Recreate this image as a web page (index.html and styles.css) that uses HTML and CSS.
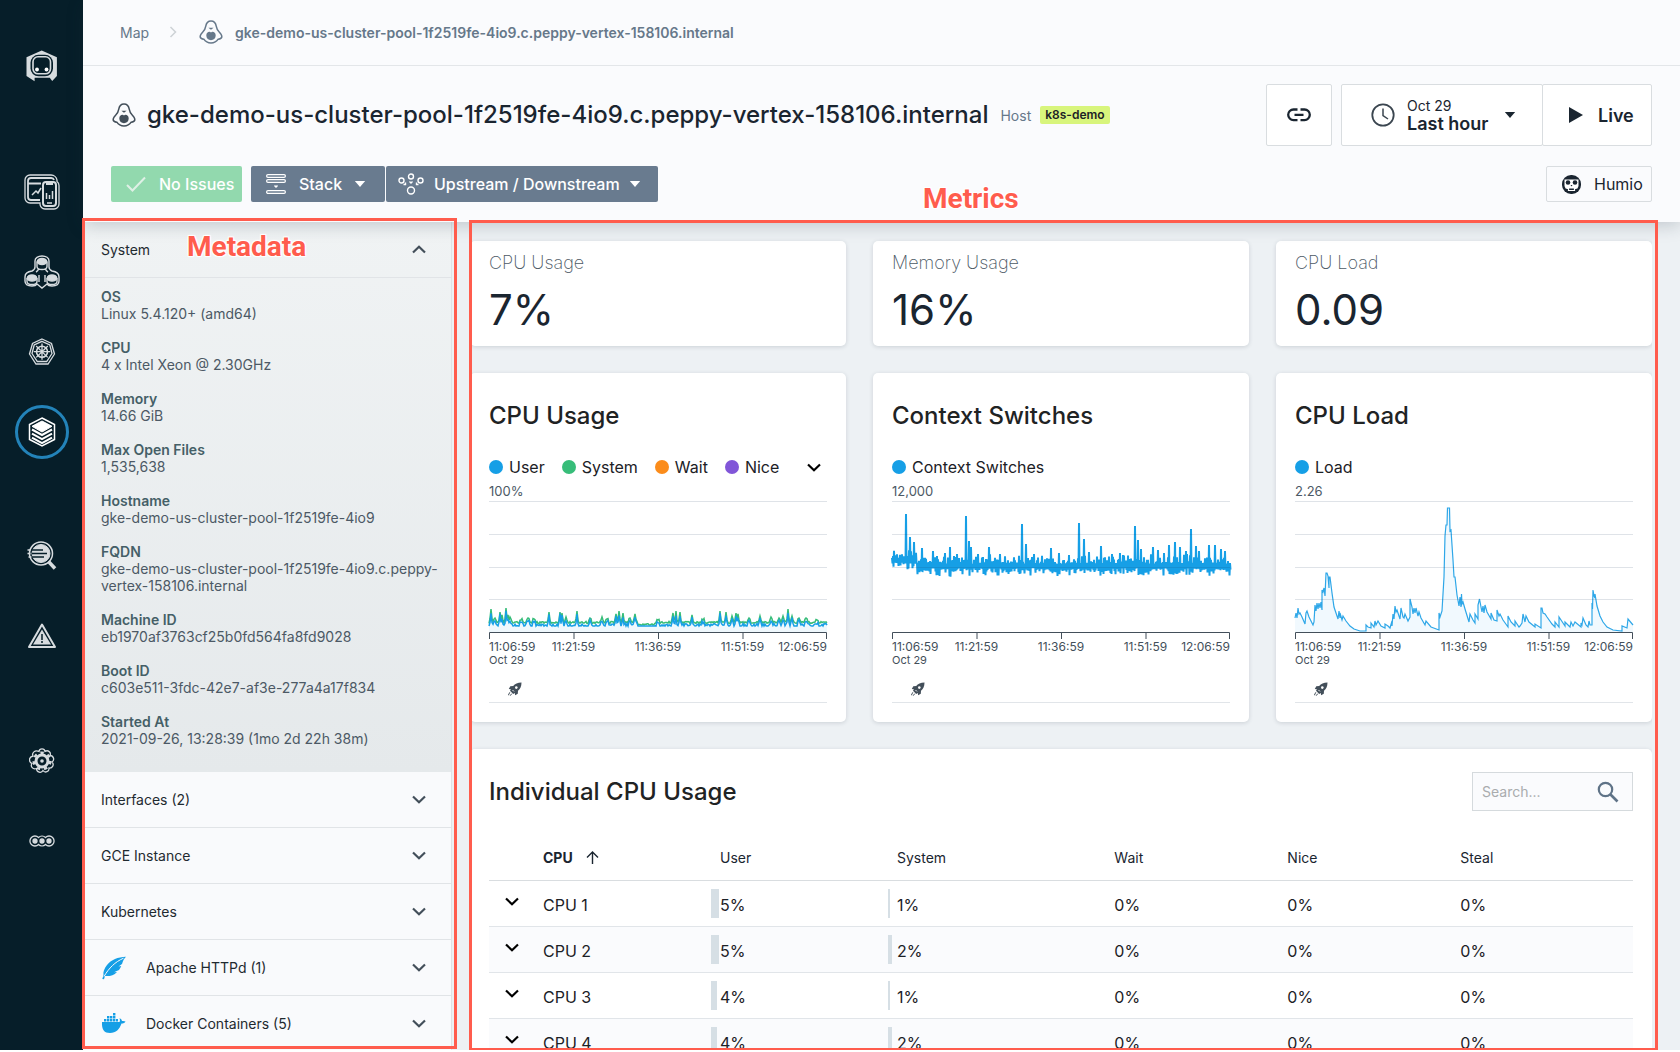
FILE: index.html
```html
<!DOCTYPE html>
<html lang="en">
<head>
<meta charset="utf-8">
<meta name="viewport" content="width=device-width, initial-scale=1">
<title>gke-demo-us-cluster-pool host dashboard</title>
<link rel="stylesheet" href="styles.css">
</head>
<body>
<svg class="sprite" aria-hidden="true">
  <symbol id="i-down" viewBox="0 0 14 9"><path d="M1 1.5l6 5.7 6-5.7" fill="none" stroke="currentColor" stroke-width="2.2"/></symbol>
  <symbol id="i-caret" viewBox="0 0 12 7"><path d="M0 0h12L6 7z" fill="currentColor"/></symbol>
  <symbol id="i-host" viewBox="0 0 24 24">
    <path d="M12 1C8.600 1 7.200 3.500 6.700 6.300 6.300 9 5.400 10.400 3.600 12.200 1.800 14 .9 15.300 1.200 17c.3 1.700 2 2 3.600 2.200C6.300 21.500 8.500 23 12 23s5.700-1.500 7.200-3.800c1.600-.2 3.300-.5 3.600-2.200.3-1.700-.6-3-2.400-4.800-1.800-1.800-2.700-3.200-3.100-5.900C16.800 3.500 15.400 1 12 1z" fill="none" stroke="currentColor" stroke-width="1.500"/>
    <path d="M9.400 7.800h5.200L12 9.800z" fill="currentColor"/>
    <path d="M12 12.400c1.200-1.300 4.700-.8 4.700 3.200 0 3-2.200 4.600-4.700 4.600s-4.700-1.600-4.700-4.600c0-4 3.500-4.500 4.700-3.200z" fill="currentColor"/>
  </symbol>
  <symbol id="i-rocket" viewBox="0 0 14 14">
    <path d="M13.500.5C9.500.5 7 1.800 5.200 4L2.300 4.300.8 7l2.100.2L2 8.800 5.200 12l1.600-.9.300 2.200L9.800 11.700 10 8.800C12.200 7 13.500 4.500 13.500.5z" fill="currentColor"/>
    <circle cx="8.300" cy="5.600" r="1.300" fill="#fff"/><path d="M4.600 8.100l1.300 1.300" stroke="#fff"/>
    <path d="M.3 13.300l1.500-3M2.200 13.700l1.500-2" stroke="currentColor"/>
  </symbol>
</svg>

<div class="app">
  <nav class="rail" aria-label="Main">
    <a class="rail-link logo" href="#" aria-label="Home">
      <svg width="32" height="32" viewBox="0 0 32 32"><path d="M.5 7.300L15.700.6l15.200 6.700V26l-4.700 5-2.400-3.300H8.600L8.600 31.300.5 26z" fill="#d7dcdf"/><rect x="4.500" y="4.800" width="22.500" height="21.500" rx="8" fill="#061e29"/><rect x="7" y="6.800" width="17.500" height="17" rx="5" fill="none" stroke="#d7dcdf" stroke-width="1.600"/><circle cx="11" cy="19.500" r="1.900" fill="#fff"/><circle cx="20.500" cy="19.500" r="1.900" fill="#fff"/></svg>
    </a>
    <a class="rail-link boards" href="#" aria-label="Custom dashboards">
      <svg width="36" height="36" viewBox="0 0 36 36" fill="none" stroke="#d7dcdf"><path d="M16 29H6a5 5 0 0 1-5-5V6a5 5 0 0 1 5-5h21a6 6 0 0 1 6 5v1.500a5 5 0 0 1 2 4V30a5 5 0 0 1-5 5H21a5 5 0 0 1-5-5z" stroke-width="1.300"/><path d="M16 26H7a3 3 0 0 1-3-3V7a3 3 0 0 1 3-3h20a3 3 0 0 1 3 2M4 9.500h13" stroke-width="1.800"/><rect x="19" y="8" width="13" height="24" rx="3" stroke-width="2"/><path d="M22 9.500h7" stroke-width="3"/><path d="M22.500 25v-6M25.500 25v-4M28.500 25v-8M23 29h5M8 21l4-4 2 2 3-5" stroke-width="1.500"/></svg>
    </a>
    <a class="rail-link apps" href="#" aria-label="Applications">
      <svg width="36" height="34" viewBox="0 0 36 34" fill="none" stroke="#d7dcdf" stroke-width="1.400"><path d="M18 1c4 0 7 2 7 5v6c0 2 1 3 3 4 4 .5 7 2.500 7 6v4c0 3.500-3 5-7 5-3 0-4-.5-5-2l-5 4-5-4c-1 1.500-2 2-5 2-4 0-7-1.500-7-5v-4c0-3.500 3-5.500 7-6 2-1 3-2 3-4V6c0-3 3-5 7-5z"/><path d="M13 6.500v5c0 2 2 3 5 3s5-1 5-3v-5M3 23v3.500c0 2 2 3 5 3s5-1 5-3V23M23 23v3.500c0 2 2 3 5 3s5-1 5-3V23M12 17c2-1 2.500-3 2.500-3M24 17c-2-1-2.500-3-2.500-3M15 27v-7M21 27v-7"/><g fill="#d7dcdf"><ellipse cx="18" cy="6.500" rx="4.700" ry="3"/><ellipse cx="8" cy="23" rx="4.700" ry="3"/><ellipse cx="28" cy="23" rx="4.700" ry="3"/></g></svg>
    </a>
    <a class="rail-link kube" href="#" aria-label="Kubernetes">
      <svg width="28" height="28" viewBox="0 0 28 28" fill="none" stroke="#d7dcdf" stroke-width="1.300"><path d="M14 1l9.500 4.500L26.500 16l-6.500 10H8L1.500 16l3-10.500z"/><path d="M14 3.300l7.800 3.700L24 15.500 18.700 23.500H9.300L4 15.500 6.200 7z"/><circle cx="14" cy="13.700" r="5.500" stroke-width="1.600"/><circle cx="14" cy="13.700" r="1.300" fill="#d7dcdf"/><path d="M14 5.500V12M14 15.300v6.500M5.800 13.700h6.500M15.700 13.700h6.500M8.200 8l4.500 4.500M15.200 14.900l4.500 4.500M19.800 8l-4.500 4.500M12.800 14.900l-4.500 4.500"/></svg>
    </a>
    <a class="rail-link infra" href="#" aria-label="Infrastructure" aria-current="page">
      <svg width="28" height="30" viewBox="0 0 28 30" fill="none" stroke="#fff"><path d="M14 1l12.500 6.500v15L14 29 1.500 22.500v-15z" stroke-width="1.500"/><path d="M14 4l10 5.300L14 15 4 9.300z" fill="#fff"/><path d="M4 12.500l10 5.500 10-5.500M4 16.700l10 5.500 10-5.500M4 20.700l10 5.500 10-5.500" stroke-width="2"/></svg>
    </a>
    <a class="rail-link analyze" href="#" aria-label="Analytics">
      <svg width="30" height="30" viewBox="0 0 30 30" fill="none" stroke="#d7dcdf"><circle cx="14" cy="12.500" r="11.500" stroke-width="1.500"/><circle cx="14" cy="12.500" r="9" fill="#d7dcdf"/><path d="M5 9h11M5 12.500h15M5 16h12" stroke="#061e29" stroke-width="1.600"/><path d="M.5 9h3M.5 12.500h3M1.500 16h3" stroke-width="1.600"/><path d="M21.500 20.500l6.500 7" stroke-width="3.500"/></svg>
    </a>
    <a class="rail-link alerts" href="#" aria-label="Events">
      <svg width="28" height="26" viewBox="0 0 28 26"><path d="M14 1.500L27 24H1z" fill="none" stroke="#d7dcdf" stroke-width="2" stroke-linejoin="round"/><path d="M14 6.500L23 21.500H5z" fill="#d7dcdf"/><path d="M14 11v6M14 18v2" stroke="#061e29" stroke-width="1.500"/></svg>
    </a>
    <a class="rail-link settings" href="#" aria-label="Settings">
      <svg width="26" height="26" viewBox="0 0 26 26" fill="none" stroke="#d7dcdf"><path d="M10 3.500C10.500 0 15.500 0 16 3.500c3-2 6.500 1 5 4 3.500 0 5 4.500 2 6.500 2.500 2.500.5 6.500-3 6 .5 3.500-4 5.500-6 2.500-1.500 3-6.500 2-6.500-2C4 22 1 18.500 3 15.500-.5 14-.5 9 4 8 2.500 5 6 1.500 10 3.500z" stroke-width="1.300"/><circle cx="13" cy="13" r="6" stroke-width="3"/><circle cx="13" cy="13" r="8.300" stroke-width="2.500" stroke-dasharray="3.400 4.050"/><circle cx="13" cy="13" r="1.800" fill="#d7dcdf" stroke="none"/></svg>
    </a>
    <a class="rail-link more" href="#" aria-label="More">
      <svg width="26" height="12" viewBox="0 0 26 12" fill="none" stroke="#d7dcdf" stroke-width="1.300"><path d="M9.500 2.500a5 5 0 1 0 0 7 5 5 0 0 0 7 0 5 5 0 1 0 0-7 5 5 0 0 0-7 0z"/><g fill="#d7dcdf"><circle cx="6" cy="6" r="2"/><circle cx="13" cy="6" r="2"/><circle cx="20" cy="6" r="2"/></g></svg>
    </a>
  </nav>

  <main class="main">
    <header class="top">
      <nav class="crumbs" aria-label="Breadcrumb">
        <a href="#">Map</a>
        <svg class="crumb-sep" width="8" height="12" viewBox="0 0 8 12"><path d="M1.500 1l5 5-5 5" fill="none" stroke="#cdd2d6" stroke-width="1.500"/></svg>
        <svg width="24" height="24"><use href="#i-host"/></svg>
        <a class="crumb-current" href="#">gke-demo-us-cluster-pool-1f2519fe-4io9.c.peppy-vertex-158106.internal</a>
      </nav>
      <div class="title-row">
        <svg class="title-icon" width="24" height="24"><use href="#i-host"/></svg>
        <h1>gke-demo-us-cluster-pool-1f2519fe-4io9.c.peppy-vertex-158106.internal</h1>
        <span class="kind">Host</span>
        <span class="tag">k8s-demo</span>
        <div class="time-tools">
          <button class="box-btn link-btn" type="button" aria-label="Copy link">
            <svg width="24" height="14" viewBox="0 0 24 14" fill="none" stroke="currentColor" stroke-width="2.300"><path d="M10.500 1.500H6.500a5.300 5.300 0 0 0 0 10.600h4M13.500 1.500h4a5.300 5.300 0 0 1 0 10.600h-4M7.500 6.800h9"/></svg>
          </button>
          <div class="split">
            <button class="box-btn range-btn" type="button">
              <svg width="24" height="24" viewBox="0 0 24 24" fill="none" stroke="#3b4650" stroke-width="1.800"><circle cx="12" cy="12" r="10.700"/><path d="M12 5.500v7l5 3.500" stroke-width="1.500"/></svg>
              <span class="range-text"><span>Oct 29</span><strong>Last hour</strong></span>
              <svg width="12" height="6"><use href="#i-caret"/></svg>
            </button>
            <button class="box-btn live-btn" type="button">
              <svg width="14" height="16" viewBox="0 0 14 16"><path d="M0 0l14 8-14 8z" fill="currentColor"/></svg>
              <span>Live</span>
            </button>
          </div>
        </div>
      </div>
      <div class="action-row">
        <button class="fill-btn ok-btn" type="button">
          <svg width="20" height="16" viewBox="0 0 20 16"><path d="M1 9l5.500 5.500L19 1.500" fill="none" stroke="#dff0e6" stroke-width="2"/></svg>
          <span>No Issues</span>
        </button>
        <div class="split">
          <button class="fill-btn stack-btn" type="button">
            <svg width="20" height="20" viewBox="0 0 20 20" fill="none" stroke="currentColor" stroke-width="1.200"><rect x=".6" y=".6" width="18.800" height="2.800" rx="1.400"/><rect x=".6" y="5.600" width="18.800" height="2.800" rx="1.400"/><rect x=".6" y="16.600" width="18.800" height="2.800" rx="1.400"/><path d="M8.500 11.500L10 13l1.500-1.500" stroke-width="1.500"/></svg>
            <span>Stack</span>
            <svg width="12" height="6"><use href="#i-caret"/></svg>
          </button>
          <button class="fill-btn flow-btn" type="button">
            <svg width="26" height="22" viewBox="0 0 26 22" fill="none" stroke="currentColor" stroke-width="1.400"><circle cx="13" cy="3.500" r="2.500"/><circle cx="3.500" cy="7.500" r="2.500"/><circle cx="22.500" cy="7.500" r="2.500"/><circle cx="13" cy="17.500" r="3.500"/><path d="M11.500 8.500L13 10l1.500-1.500M7.500 9.500v2H5.500M18.500 9.500v2h2"/></svg>
            <span>Upstream / Downstream</span>
            <svg width="12" height="6"><use href="#i-caret"/></svg>
          </button>
        </div>
        <button class="humio-btn" type="button">
          <svg width="19" height="19" viewBox="0 0 19 19"><rect width="19" height="19" rx="9" fill="currentColor"/><path d="M2.500 4.500h14v6.500l-1 2.500h-12l-1-2.500z" fill="#fff"/><circle cx="6" cy="7.500" r="2.300" fill="currentColor"/><circle cx="13" cy="7.500" r="2.300" fill="currentColor"/><path d="M8.500 10h2l-1 1.500z" fill="currentColor"/><path d="M4.500 13.500h2v2h6v-2h2" fill="none" stroke="#fff" stroke-width="1.200"/></svg>
          <span>Humio</span>
        </button>
      </div>
    </header>

    <div class="work">
      <aside class="meta">
        <section class="meta-open">
          <button class="fold" type="button" aria-expanded="true"><span>System</span><svg class="flip" width="14" height="9"><use href="#i-down"/></svg></button>
          <dl class="facts">
            <div><dt>OS</dt><dd>Linux 5.4.120+ (amd64)</dd></div>
            <div><dt>CPU</dt><dd>4 x Intel Xeon @ 2.30GHz</dd></div>
            <div><dt>Memory</dt><dd>14.66 GiB</dd></div>
            <div><dt>Max Open Files</dt><dd>1,535,638</dd></div>
            <div><dt>Hostname</dt><dd>gke-demo-us-cluster-pool-1f2519fe-4io9</dd></div>
            <div><dt>FQDN</dt><dd>gke-demo-us-cluster-pool-1f2519fe-4io9.c.peppy-vertex-158106.internal</dd></div>
            <div><dt>Machine ID</dt><dd>eb1970af3763cf25b0fd564fa8fd9028</dd></div>
            <div><dt>Boot ID</dt><dd>c603e511-3fdc-42e7-af3e-277a4a17f834</dd></div>
            <div><dt>Started At</dt><dd>2021-09-26, 13:28:39 (1mo 2d 22h 38m)</dd></div>
          </dl>
        </section>
        <button class="fold" type="button" aria-expanded="false"><span>Interfaces (2)</span><svg width="14" height="9"><use href="#i-down"/></svg></button>
        <button class="fold" type="button" aria-expanded="false"><span>GCE Instance</span><svg width="14" height="9"><use href="#i-down"/></svg></button>
        <button class="fold" type="button" aria-expanded="false"><span>Kubernetes</span><svg width="14" height="9"><use href="#i-down"/></svg></button>
        <button class="fold" type="button" aria-expanded="false">
          <svg class="tech" width="27" height="24" viewBox="0 0 27 24"><path d="M25 .8C17 1 10 4 6 9c-3 4-4 7-3.500 10L1.300 23l1.700.3L4 20c4 .5 9-.5 12-4l-3 .2 5-2.200c1-1.300 1.700-2.500 2.200-4l-2.700.5 3.500-2.500C22 5 23 2.500 25 .8z" fill="#169fe6"/><path d="M3 20.500C8 12 14 6 22.500 2.200" fill="none" stroke="#f9fafc"/></svg>
          <span>Apache HTTPd (1)</span><svg width="14" height="9"><use href="#i-down"/></svg></button>
        <button class="fold" type="button" aria-expanded="false">
          <svg class="tech" width="27" height="24" viewBox="0 0 27 24" fill="#169fe6"><path d="M1 10h17.500c.7-1 .5-2.500 0-4 1.500.8 2.300 1.800 2.500 3 1.300-.3 2.500 0 3.500.6-.8 1.400-2 2-4 2C18.500 17.500 15 21 9 21 3.500 21 .5 18 1 10z"/><path d="M3 7h2.400v2.400H3zM6 7h2.400v2.400H6zM9 7h2.400v2.400H9zM12 7h2.400v2.400H12zM15 7h2v2.400h-2zM6 4h2.400v2.400H6zM9 4h2.400v2.400H9zM12 4h2.400v2.400H12zM12 1h2.400v2.400H12z"/></svg>
          <span>Docker Containers (5)</span><svg width="14" height="9"><use href="#i-down"/></svg></button>
      </aside>

      <div class="metrics">
        <div class="grid">
          <section class="card stat"><h2>CPU Usage</h2><p>7%</p></section>
          <section class="card stat"><h2>Memory Usage</h2><p>16%</p></section>
          <section class="card stat"><h2>CPU Load</h2><p>0.09</p></section>

          <section class="card chart">
            <h2>CPU Usage</h2>
            <ul class="legend">
              <li class="blue">User</li><li class="green">System</li><li class="orange">Wait</li><li class="purple">Nice</li>
              <li class="legend-more"><button type="button" aria-label="More series"><svg width="14" height="9"><use href="#i-down"/></svg></button></li>
            </ul>
            <div class="peak">100%</div>
            <svg class="plot" id="plot-cpu" viewBox="0 0 338 138" preserveAspectRatio="none"></svg>
            <div class="times"><span>11:06:59</span><span>11:21:59</span><span>11:36:59</span><span>11:51:59</span><span>12:06:59</span></div>
            <div class="day">Oct 29</div>
            <div class="events"><svg width="14" height="14"><use href="#i-rocket"/></svg></div>
          </section>
          <section class="card chart">
            <h2>Context Switches</h2>
            <ul class="legend"><li class="blue">Context Switches</li></ul>
            <div class="peak">12,000</div>
            <svg class="plot" id="plot-switches" viewBox="0 0 338 138" preserveAspectRatio="none"></svg>
            <div class="times"><span>11:06:59</span><span>11:21:59</span><span>11:36:59</span><span>11:51:59</span><span>12:06:59</span></div>
            <div class="day">Oct 29</div>
            <div class="events"><svg width="14" height="14"><use href="#i-rocket"/></svg></div>
          </section>
          <section class="card chart">
            <h2>CPU Load</h2>
            <ul class="legend"><li class="blue">Load</li></ul>
            <div class="peak">2.26</div>
            <svg class="plot" id="plot-load" viewBox="0 0 338 138" preserveAspectRatio="none"></svg>
            <div class="times"><span>11:06:59</span><span>11:21:59</span><span>11:36:59</span><span>11:51:59</span><span>12:06:59</span></div>
            <div class="day">Oct 29</div>
            <div class="events"><svg width="14" height="14"><use href="#i-rocket"/></svg></div>
          </section>

          <section class="card wide">
            <div class="wide-head">
              <h2>Individual CPU Usage</h2>
              <label class="search">
                <input type="search" placeholder="Search..." aria-label="Search CPUs">
                <svg width="22" height="22" viewBox="0 0 22 22" fill="none" stroke="#5f7387"><circle cx="8.500" cy="8.500" r="6.700" stroke-width="2.200"/><path d="M13.500 13.500l7 7" stroke-width="2.600"/></svg>
              </label>
            </div>
            <table>
              <colgroup><col class="c-open"><col class="c-cpu"><col class="c-user"><col class="c-system"><col class="c-wait"><col class="c-nice"><col></colgroup>
              <thead><tr><th></th><th><button class="sort" type="button">CPU <svg width="13" height="13" viewBox="0 0 13 13" fill="none" stroke="currentColor" stroke-width="1.400"><path d="M6.500 13V1M1 6.500l5.500-5.500L12 6.500"/></svg></button></th><th>User</th><th>System</th><th>Wait</th><th>Nice</th><th>Steal</th></tr></thead>
              <tbody>
                <tr><td><button class="row-open" type="button" aria-label="Expand CPU 1"><svg width="14" height="9"><use href="#i-down"/></svg></button></td><td>CPU 1</td><td><i class="bar" style="width:8px"></i>5%</td><td><i class="bar" style="width:2px"></i>1%</td><td>0%</td><td>0%</td><td>0%</td></tr>
                <tr><td><button class="row-open" type="button" aria-label="Expand CPU 2"><svg width="14" height="9"><use href="#i-down"/></svg></button></td><td>CPU 2</td><td><i class="bar" style="width:8px"></i>5%</td><td><i class="bar" style="width:4px"></i>2%</td><td>0%</td><td>0%</td><td>0%</td></tr>
                <tr><td><button class="row-open" type="button" aria-label="Expand CPU 3"><svg width="14" height="9"><use href="#i-down"/></svg></button></td><td>CPU 3</td><td><i class="bar" style="width:6px"></i>4%</td><td><i class="bar" style="width:2px"></i>1%</td><td>0%</td><td>0%</td><td>0%</td></tr>
                <tr><td><button class="row-open" type="button" aria-label="Expand CPU 4"><svg width="14" height="9"><use href="#i-down"/></svg></button></td><td>CPU 4</td><td><i class="bar" style="width:6px"></i>4%</td><td><i class="bar" style="width:4px"></i>2%</td><td>0%</td><td>0%</td><td>0%</td></tr>
              </tbody>
            </table>
          </section>
        </div>
      </div>
      <div class="callout callout-meta"><span>Metadata</span></div>
      <div class="callout callout-metrics"><span>Metrics</span></div>
    </div>
  </main>
</div>
<script src="charts.js"></script>
</body>
</html>
```

FILE: styles.css
```css
* { box-sizing: border-box; }
body { margin: 0; background: #fff; color: #1c2126; font: 14px/17px Inter, "Liberation Sans", sans-serif; overflow: hidden; }
button { font: inherit; color: inherit; background: none; border: 0; padding: 0; margin: 0; cursor: pointer; }
a { color: inherit; text-decoration: none; }
h1, h2, p, ul, dl, dd { margin: 0; padding: 0; }
svg { flex: none; display: block; }
.sprite { position: absolute; width: 0; height: 0; }

.app { display: flex; height: calc(100vh - 2px); background: #edf1f4; }

/* left rail */
.rail { flex: none; width: 83px; background: #061e29; display: flex; flex-direction: column; align-items: center; padding-top: 39px; }
.rail-link { display: flex; align-items: center; justify-content: center; width: 54px; height: 54px; border-radius: 50%; }
.boards { margin-top: 72px; }
.apps, .kube, .infra, .alerts, .more { margin-top: 26px; }
.analyze { margin-top: 70px; }
.settings { margin-top: 71px; }
.infra { border: 3px solid #2383b9; }

.main { flex: 1; min-width: 0; display: flex; flex-direction: column; }

/* page header */
.top { flex: none; position: relative; z-index: 1; background: #fafbfd; box-shadow: 0 4px 16px rgba(30, 45, 60, .2); }
.crumbs { display: flex; align-items: center; height: 66px; padding: 0 37px 1px; border-bottom: 1px solid #e3e6e9; color: #66788a; }
.crumb-sep { margin: 0 22px 0 20px; }
.crumb-current { margin-left: 12px; font-weight: 600; }
.title-row { display: flex; align-items: center; height: 62px; margin-top: 18px; padding: 0 28px 0 29px; }
.title-icon { color: #434f5a; }
h1 { margin-left: 11px; font-size: 24px; line-height: 32px; font-weight: 500; color: #1a2530; white-space: nowrap; }
.kind { margin-left: 12px; color: #66788a; }
.tag { margin-left: 9px; padding: 0 5px; border-radius: 2px; background: #d8f57c; font-size: 12px; line-height: 18px; font-weight: 600; }
.time-tools { margin-left: auto; display: flex; gap: 9px; color: #1a2530; }
.split { display: flex; }
.box-btn { display: flex; align-items: center; height: 62px; background: #fff; border: 1px solid #d9dde0; border-radius: 2px; }
.link-btn { width: 66px; justify-content: center; }
.range-btn { width: 202px; padding-left: 29px; gap: 12px; }
.range-btn > :last-child { margin-left: 4px; }
.range-text { display: flex; flex-direction: column; text-align: left; line-height: 18px; }
.range-text strong { font-size: 18px; font-weight: 600; white-space: nowrap; }
.live-btn { width: 110px; margin-left: -1px; padding-left: 26px; gap: 15px; font-size: 18px; font-weight: 600; }
.action-row { display: flex; gap: 10px; margin-top: 20px; padding: 0 28px 20px; }
.fill-btn { display: flex; align-items: center; height: 36px; border-radius: 2px; background: #697b8f; color: #fff; font-size: 16px; font-weight: 500; white-space: nowrap; }
.ok-btn { width: 131px; padding-left: 15px; gap: 13px; background: #92d9ae; }
.stack-btn { width: 134px; padding-left: 15px; gap: 13px; }
.flow-btn { width: 272px; margin-left: 1px; padding-left: 12px; gap: 10px; }
.split .fill-btn > :last-child { margin-left: -1px; }
.action-row .split { margin-left: -1px; }
.humio-btn { display: flex; align-items: center; gap: 13px; height: 36px; width: 106px; margin-left: auto; padding-left: 15px; border: 1px solid #d9dde0; border-radius: 2px; color: #1a2530; font-size: 16px; }

/* workspace */
.work { flex: 1; min-height: 0; position: relative; display: flex; gap: 18px; padding-right: 28px; }
.meta { flex: none; width: 369px; height: 100%; overflow: hidden; border-right: 1px solid #dfe3e6; background: #f9fafc; }
.meta-open { background: linear-gradient(#f0f3f4, #e5e9eb); }
.fold { display: flex; align-items: center; width: 100%; height: 56px; padding: 0 25px 0 18px; border-bottom: 1px solid #e1e4e7; text-align: left; color: #1f2a30; }
.fold > :last-child { margin-left: auto; color: #434f5a; }
.flip { transform: rotate(180deg); }
.tech { margin-right: 18px; }
.facts { display: flex; flex-direction: column; gap: 17px; padding: 10px 8px 25px 18px; color: #4c5965; }
.facts dt { font-weight: 600; color: #455f67; }

.metrics { flex: 1; min-width: 0; height: 100%; overflow: hidden; padding-top: 19px; }
.grid { display: grid; grid-template-columns: repeat(3, minmax(0, 1fr)); gap: 27px; }
.card { background: #fff; border-radius: 5px; box-shadow: 0 1px 4px rgba(30, 45, 60, .16); padding: 0 19px; }
.card h2 { font-size: 24px; line-height: 32px; font-weight: 500; color: #1f2324; }
.card.stat { height: 105px; padding-top: 12px; }
.card.stat h2 { font-size: 18px; line-height: 20px; font-weight: 200; color: #4c5965; }
.stat p { margin-top: 13px; font-size: 42px; line-height: 48px; color: #1a2530; }

.chart { height: 349px; padding-top: 27px; }
.legend { display: flex; align-items: center; gap: 17px; height: 20px; margin-top: 25px; list-style: none; font-size: 16px; }
.legend li { display: flex; align-items: center; gap: 6px; white-space: nowrap; }
.legend li:not(.legend-more)::before { content: ""; width: 14px; height: 14px; border-radius: 50%; background: var(--dot); }
.blue { --dot: #169fe6; }
.green { --dot: #37bd79; }
.orange { --dot: #fb8c1b; }
.purple { --dot: #8156d8; }
.legend .legend-more { margin: 0 6px 0 auto; color: #000; }
.peak { margin-top: 6px; font-size: 13px; line-height: 16px; color: #4c5965; }
.plot { width: 100%; height: 138px; margin-top: 2px; overflow: visible; }
.plot path { vector-effect: non-scaling-stroke; }
.times { display: grid; grid-template-columns: repeat(8, minmax(0, 1fr)); margin-top: 1px; font-size: 12px; line-height: 14px; color: #434f5a; white-space: nowrap; }
.times span:nth-child(n+2):nth-child(-n+4) { grid-column: span 2; justify-self: center; }
.times span:last-child { justify-self: end; }
.day { font-size: 11px; line-height: 12px; color: #434f5a; }
.events { height: 37px; padding: 16px 0 0 19px; border-bottom: 1px solid #e1e5e9; color: #434f5a; }

.wide { grid-column: 1 / -1; padding-top: 23px; padding-bottom: 24px; }
.wide-head { display: flex; align-items: center; justify-content: space-between; height: 39px; }
.search { display: flex; align-items: center; width: 161px; height: 39px; padding: 0 13px 0 9px; border: 1px solid #d5dadd; background: #fafbfd; }
.search input { flex: 1; min-width: 0; border: 0; padding: 0; outline: 0; background: none; font: inherit; }
.search input::placeholder { color: #a9acae; }
table { width: 100%; margin-top: 23px; table-layout: fixed; border-collapse: separate; border-spacing: 0; }
.c-open { width: 45px; }
.c-cpu { width: 177px; }
.c-user { width: 177px; }
.c-system { width: 19%; }
.c-wait, .c-nice { width: 173px; }
th, td { position: relative; padding: 0 0 0 9px; text-align: left; white-space: nowrap; }
th { height: 47px; border-bottom: 1px solid #d9dde0; font-weight: 400; color: #1a2530; }
td { height: 46px; padding-top: 3px; border-bottom: 1px solid #e1e5e9; font-size: 16px; }
tbody tr:nth-child(even) td { background: #fafbfd; }
.sort { display: flex; align-items: center; gap: 13px; font-weight: 700; }
td:first-child { padding-left: 16px; color: #000; }
.row-open { display: block; padding-bottom: 8px; }
.bar { position: absolute; left: 0; top: 8px; height: 29px; background: #d6dfe5; }

/* annotations laid over the page */
.callout { position: absolute; z-index: 2; border: 3px solid #ff5c4d; pointer-events: none; color: #ff5c4d; font: 700 28px/32px Roboto, sans-serif; text-shadow: 0 0 2px #fff, 1px 1px 1px #fff, -1px -1px 1px #fff, 1px -1px 1px #fff, -1px 1px 1px #fff; }
.callout span { position: absolute; }
.callout-meta { left: -1px; top: -4px; bottom: 1px; width: 375px; }
.callout-meta span { left: 102px; top: 10px; }
.callout-metrics { left: 386px; right: 22px; top: -2px; bottom: -1px; }
.callout-metrics span { left: 451px; top: -40px; }
```

FILE: charts.js
```js
const NS = "http://www.w3.org/2000/svg";
const BASE = 131;

function path(svg, d, attrs) {
  const el = document.createElementNS(NS, "path");
  el.setAttribute("d", d);
  el.setAttribute("fill", "none");
  for (const key in attrs) el.setAttribute(key, attrs[key]);
  svg.appendChild(el);
}

function frame(svg) {
  path(svg, "M0 .5H338M0 33.5H338M0 66.5H338M0 98.5H338", { stroke: "#1a3c5a", "stroke-opacity": ".14" });
  path(svg, "M.5 138V131.5H337.5V138M85 131V138M169.500 131V138M254 131V138", { stroke: "#434f5a" });
}

const line = pts => "M" + pts.map(p => p[0] + " " + p[1].toFixed(1)).join("L");
const area = pts => line(pts) + "V" + BASE + "H" + pts[0][0] + "Z";

// repeatable noise in the range 0..1
function noise(seed) {
  return () => (seed = (seed * 16807) % 2147483647) / 2147483647;
}

// CPU usage: low noise floor with short bursts
{
  const svg = document.getElementById("plot-cpu");
  const bursts = { 2: 108, 6: 117, 11: 111, 13: 114, 17: 107, 19: 114, 21: 116, 32: 119, 39: 117, 45: 118, 60: 111, 71: 111, 73: 112, 77: 116, 88: 110, 101: 117, 113: 116, 118: 118, 127: 113, 130: 110, 134: 112, 141: 117, 146: 113, 169: 119, 184: 112, 187: 110, 191: 111, 203: 114, 214: 119, 231: 110, 237: 111, 243: 115, 247: 112, 249: 113, 260: 117, 271: 115, 282: 116, 290: 117, 294: 115, 299: 108, 303: 115, 310: 117, 317: 117, 328: 119 };
  const rnd = noise(41);
  const user = [], system = [];
  for (let x = 0; x <= 338; x++) {
    const dip = x > 148 && x < 166 ? 2 : 0;
    let y = 122.5 + dip - rnd() * 2;
    if (bursts[x]) y = bursts[x];
    else if (bursts[x - 1] || bursts[x + 1]) y -= 3;
    system.push([x, y]);
    user.push([x, Math.min(125, y + 1.5 + rnd() * 3)]);
  }
  path(svg, area(user), { fill: "#169fe6", "fill-opacity": ".07" });
  path(svg, line(system), { stroke: "#37bd79", "stroke-width": "1.5" });
  path(svg, line(user), { stroke: "#169fe6", "stroke-width": "1.5" });
  frame(svg);
}

// context switches: dense band with periodic spikes
{
  const svg = document.getElementById("plot-switches");
  const spikes = { 14: 13, 18: 36, 22: 41, 30: 47, 41: 50, 53: 52, 58: 46, 74: 15, 77: 40, 79: 46, 86: 53, 97: 46, 108: 53, 130: 23, 134: 43, 142: 53, 159: 47, 167: 52, 177: 54, 187: 22, 192: 38, 197: 51, 209: 45, 220: 53, 228: 52, 243: 25, 246: 39, 249: 48, 261: 46, 266: 49, 272: 52, 277: 44, 283: 41, 288: 46, 294: 50, 299: 28, 304: 45, 307: 50, 317: 44, 323: 44, 329: 48, 333: 50 };
  const rnd = noise(97);
  const pts = [];
  for (let x = 0; x <= 338; x++) {
    const lift = x < 25 ? 6 : 0;
    pts.push([x, spikes[x] || 63 - lift - rnd() * rnd() * 12]);
    pts.push([x + .5, 67 - lift + rnd() * rnd() * 10]);
  }
  path(svg, line(pts), { stroke: "#169fe6", "stroke-width": "2" });
  frame(svg);
}

// load average
{
  const svg = document.getElementById("plot-load");
  const pts = [[0,117],[1,112],[2,117],[3,107],[4,113],[5,112],[7,116],[10,123],[11,112],[12,110],[14,116],[18,124],[19,121],[20,104],[21,110],[22,102],[23,108],[24,102],[25,107],[26,101],[27,109],[27,89],[28,91],[29,87],[30,95],[31,72],[32,72],[33,75],[34,87],[34,76],[35,76],[37,92],[39,106],[42,115],[43,118],[44,110],[45,117],[45,112],[47,119],[48,115],[51,120],[55,125],[59,128],[65,130],[71,130],[71,124],[73,126],[76,127],[76,122],[79,126],[80,120],[81,124],[83,120],[86,125],[90,127],[90,123],[93,125],[95,127],[97,120],[97,125],[98,113],[99,118],[100,105],[101,111],[102,109],[105,118],[106,107],[108,116],[109,117],[110,113],[113,120],[115,116],[115,98],[117,106],[118,113],[119,107],[120,112],[121,107],[123,115],[124,111],[126,117],[130,124],[131,120],[136,126],[144,129],[144,112],[145,116],[147,110],[149,76],[150,35],[151,24],[152,24],[152.500,7],[154.500,7],[155,30],[156,29],[158,59],[159,76],[160,76],[162,94],[164,105],[165,96],[166,106],[166.500,93],[167,103],[168,101],[170,108],[174,121],[175,113],[178,119],[180,122],[180,113],[183,118],[183,104],[184.500,98],[186,106],[187,111],[188,105],[189,112],[190,104],[192,111],[196,118],[196,112],[199,119],[202,120],[202,109],[204,115],[205,113],[208,119],[213,126],[213,115],[216,121],[220,125],[220,120],[224,126],[225,125],[227,122],[228,113],[230,121],[231,115],[234,121],[240,126],[240,123],[246,127],[246,107],[247,107],[248,112],[250,113],[252,116],[257,123],[260,126],[260,121],[264,126],[264,116],[268,122],[270,125],[270,121],[275,126],[276,121],[278,125],[280,121],[286,126],[286,122],[287,124],[288,117],[291,124],[293,126],[294,120],[295,124],[297,124],[297,102],[297.500,108],[298,89],[299,95],[300,97],[300,93],[302,105],[305,115],[308,121],[312,126],[318,129],[327,130],[327,125],[332,127],[333,118],[338,124]];
  path(svg, area(pts), { fill: "#169fe6", "fill-opacity": ".06" });
  path(svg, line(pts), { stroke: "#2ea7e8", "stroke-width": "1.2" });
  frame(svg);
}
```
